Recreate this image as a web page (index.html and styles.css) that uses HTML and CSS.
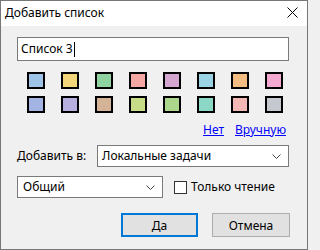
FILE: index.html
```html
<!DOCTYPE html>
<html lang="ru">
<head>
<meta charset="utf-8">
<title>Добавить список</title>
<link rel="stylesheet" href="styles.css">
</head>
<body>
<div class="window">
  <div class="titlebar">
    <span class="title">Добавить список</span>
    <svg class="close" width="11" height="11" viewBox="0 0 11 11"><path d="M0.5 0.5L10.5 10.5M10.5 0.5L0.5 10.5" stroke="#000" stroke-width="1" fill="none"/></svg>
  </div>
  <div class="content">
    <div class="input"><span class="value">Список 3</span><span class="caret"></span></div>
    <div class="swatches">
      <span class="sw" style="background:#9dc3e6"></span>
      <span class="sw" style="background:#f5d77b"></span>
      <span class="sw" style="background:#8fd4a0"></span>
      <span class="sw" style="background:#f4a7a3"></span>
      <span class="sw" style="background:#d5a6d0"></span>
      <span class="sw" style="background:#9ad3e3"></span>
      <span class="sw" style="background:#f2bc82"></span>
      <span class="sw" style="background:#f4a9d0"></span>
      <span class="sw" style="background:#a3b4e3"></span>
      <span class="sw" style="background:#b7afe0"></span>
      <span class="sw" style="background:#d5b397"></span>
      <span class="sw" style="background:#c6dc86"></span>
      <span class="sw" style="background:#acd68b"></span>
      <span class="sw" style="background:#8ad8c5"></span>
      <span class="sw" style="background:#f3b7b4"></span>
      <span class="sw" style="background:#c5c9cf"></span>
    </div>
    <div class="links"><a href="#">Нет</a><a href="#">Вручную</a></div>
    <div class="row row1">
      <span class="label">Добавить в:</span>
      <div class="select wide"><span>Локальные задачи</span><svg class="chev" width="9" height="5" viewBox="0 0 9 5"><path d="M0.5 0.5L4.5 4.5L8.5 0.5" stroke="#444" fill="none"/></svg></div>
    </div>
    <div class="row row2">
      <div class="select narrow"><span>Общий</span><svg class="chev" width="9" height="5" viewBox="0 0 9 5"><path d="M0.5 0.5L4.5 4.5L8.5 0.5" stroke="#444" fill="none"/></svg></div>
      <span class="checkbox"></span>
      <span class="cblabel">Только чтение</span>
    </div>
    <div class="buttons">
      <button class="btn default">Да</button>
      <button class="btn">Отмена</button>
    </div>
  </div>
</div>
</body>
</html>
```
FILE: styles.css
```css
html, body {
  margin: 0;
  padding: 0;
  background: #f0f0f0;
}
body {
  font-family: "Noto Sans", "Liberation Sans", sans-serif;
  font-size: 12px;
  color: #000;
}
.window {
  width: 308px;
  height: 250px;
  box-sizing: border-box;
  border: 1px solid #777;
  display: flex;
  flex-direction: column;
}
.titlebar {
  height: 25px;
  background: #fff;
  display: flex;
  align-items: center;
  justify-content: space-between;
  padding-left: 4px;
  padding-right: 9px;
}
.title {
  font-size: 12px;
  line-height: 16px;
  margin-top: -1px;
}
.close {
  display: block;
  margin-top: -2px;
}
.content {
  flex: 1;
  background: #f0f0f0;
  padding: 11px 0 0 16px;
  display: flex;
  flex-direction: column;
}
.input {
  width: 272px;
  height: 24px;
  box-sizing: border-box;
  border: 1px solid #7a7a7a;
  background: #fff;
  display: flex;
  align-items: center;
  padding-left: 3px;
}
.value {
  line-height: 16px;
}
.caret {
  width: 1px;
  height: 15px;
  background: #000;
  margin-left: 1px;
}
.swatches {
  margin-top: 11px;
  margin-left: 10px;
  display: grid;
  grid-template-columns: repeat(8, 18px);
  grid-auto-rows: 17px;
  column-gap: 16px;
  row-gap: 7px;
}
.sw {
  display: block;
  box-sizing: border-box;
  border: 2px solid #000;
}
.links {
  margin-top: 9px;
  width: 269px;
  display: flex;
  justify-content: flex-end;
  gap: 11px;
  line-height: 16px;
}
.links a {
  color: #0000ff;
  text-decoration: underline;
}
.row {
  display: flex;
  align-items: center;
}
.row1 {
  margin-top: 7px;
}
.label {
  width: 80px;
  line-height: 16px;
}
.select {
  height: 22px;
  box-sizing: border-box;
  border: 1px solid #7a7a7a;
  background: #fff;
  display: flex;
  align-items: center;
  justify-content: space-between;
  padding-left: 4px;
  padding-right: 7px;
  line-height: 16px;
}
.wide {
  width: 192px;
}
.narrow {
  width: 146px;
  padding-left: 5px;
}
.chev {
  display: block;
}
.row2 {
  margin-top: 9px;
}
.checkbox {
  width: 13px;
  height: 13px;
  box-sizing: border-box;
  border: 1px solid #333;
  background: #fff;
  margin-left: 11px;
}
.cblabel {
  margin-left: 4px;
  line-height: 16px;
}
.buttons {
  margin-top: 15px;
  width: 273px;
  display: flex;
  justify-content: flex-end;
  gap: 14px;
}
.btn {
  width: 78px;
  height: 24px;
  box-sizing: border-box;
  font-family: inherit;
  font-size: 12px;
  color: #000;
  background: #e1e1e1;
  border: 1px solid #adadad;
  padding: 0;
  margin: 0;
}
.btn.default {
  width: 77px;
  border: 2px solid #0078d7;
}
```
